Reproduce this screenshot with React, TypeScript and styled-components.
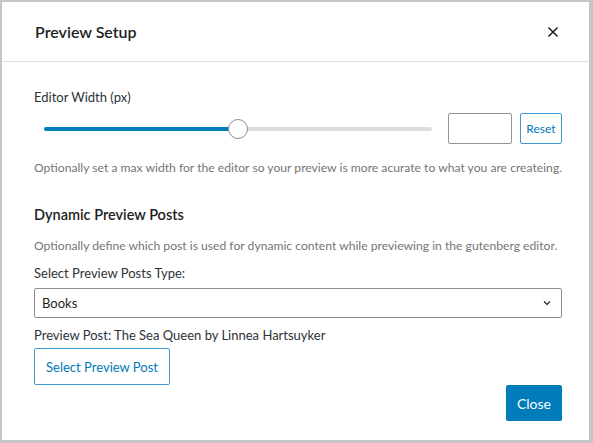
import React from 'react';
import styled, { createGlobalStyle } from 'styled-components';

const GlobalStyle = createGlobalStyle`
  html, body {
    margin: 0;
    padding: 0;
    background: #c6c6c6;
  }
  body {
    font-family: Lato, "Noto Sans", sans-serif;
    color: #1e1e1e;
  }
`;

const Backdrop = styled.div`
  width: 593px;
  height: 443px;
  padding: 2px 4px 3px 2px;
  box-sizing: border-box;
`;

const Modal = styled.div`
  width: 100%;
  height: 100%;
  background: #fff;
  display: flex;
  flex-direction: column;
`;

const Header = styled.div`
  flex-shrink: 0;
  height: 59px;
  border-bottom: 1px solid #e0e0e0;
  display: flex;
  align-items: center;
  justify-content: space-between;
  padding: 0 24px 0 33px;
`;

const Title = styled.h1`
  margin: 0;
  font-size: 16px;
  font-weight: 600;
  color: #1e1e1e;
`;

const CloseIcon = styled.button`
  border: none;
  background: none;
  padding: 0;
  width: 24px;
  height: 24px;
  display: flex;
  align-items: center;
  justify-content: center;
  color: #1e1e1e;
`;

const Body = styled.div`
  flex: 1;
  padding: 26px 27px 0 32px;
  display: flex;
  flex-direction: column;
`;

const Label = styled.div`
  font-size: 13px;
  color: #2c3338;
  line-height: 18px;
`;

const SliderRow = styled.div`
  display: flex;
  align-items: center;
  margin-top: 7px;
  padding-left: 10px;
`;

const Track = styled.div`
  position: relative;
  flex: 1;
  height: 4px;
  background: #dddddd;
  border-radius: 2px;
  margin-right: 16px;
`;

const Fill = styled.div`
  height: 100%;
  background: #007cba;
  border-radius: 2px;
`;

const Thumb = styled.div`
  position: absolute;
  top: 50%;
  width: 18px;
  height: 18px;
  margin: -10px 0 0 -10px;
  border-radius: 50%;
  background: #fff;
  border: 1px solid #8a8f96;
`;

const NumberInput = styled.input`
  width: 64px;
  height: 31px;
  box-sizing: border-box;
  border: 1px solid #949494;
  border-radius: 2px;
  margin-right: 8px;
`;

const SmallButton = styled.button`
  height: 31px;
  width: 42px;
  box-sizing: border-box;
  border: 1px solid #3d9ad1;
  border-radius: 2px;
  background: #fff;
  color: #0079b8;
  font-family: inherit;
  font-size: 12px;
  padding: 0;
`;

const Help = styled.p<{ $top: number }>`
  margin: ${(p) => p.$top}px 0 0;
  font-size: 12.15px;
  color: #757575;
  line-height: 18px;
  white-space: nowrap;
`;

const SectionTitle = styled.h2`
  margin: 28px 0 0;
  font-size: 14.5px;
  font-weight: 600;
  color: #1e1e1e;
  line-height: 20px;
`;

const FieldLabel = styled(Label)<{ $top: number }>`
  margin-top: ${(p) => p.$top}px;
`;

const SelectBox = styled.div`
  flex-shrink: 0;
  margin-top: 6px;
  height: 30px;
  box-sizing: border-box;
  border: 1px solid #8c8f94;
  border-radius: 2px;
  display: flex;
  align-items: center;
  justify-content: space-between;
  padding: 0 8px 0 7px;
  font-size: 13px;
  color: #1e1e1e;
`;

const OutlineButton = styled.button`
  flex-shrink: 0;
  margin-top: 4px;
  align-self: flex-start;
  height: 37px;
  width: 136px;
  box-sizing: border-box;
  border: 1px solid #3d9ad1;
  border-radius: 2px;
  background: #fff;
  color: #0079b8;
  font-family: inherit;
  font-size: 13px;
  padding: 0;
`;

const Footer = styled.div`
  display: flex;
  justify-content: flex-end;
`;

const PrimaryButton = styled.button`
  height: 36px;
  width: 56px;
  box-sizing: border-box;
  border: none;
  border-radius: 2px;
  background: #007cba;
  color: #fff;
  font-family: inherit;
  font-size: 14px;
  padding: 0;
`;

const App: React.FC = () => {
  const value = 50;
  return (
    <>
      <GlobalStyle />
      <Backdrop>
        <Modal>
          <Header>
            <Title>Preview Setup</Title>
            <CloseIcon aria-label="Close">
              <svg width="20" height="20" viewBox="0 0 24 24">
                <path d="M6.5 6.5l11 11M17.5 6.5l-11 11" stroke="currentColor" strokeWidth="1.8" fill="none" />
              </svg>
            </CloseIcon>
          </Header>
          <Body>
            <Label>Editor Width (px)</Label>
            <SliderRow>
              <Track>
                <Fill style={{ width: `${value}%` }} />
                <Thumb style={{ left: `${value}%` }} />
              </Track>
              <NumberInput type="text" />
              <SmallButton>Reset</SmallButton>
            </SliderRow>
            <Help $top={15}>
              Optionally set a max width for the editor so your preview is more acurate to what you are createing.
            </Help>
            <SectionTitle>Dynamic Preview Posts</SectionTitle>
            <Help $top={12}>
              Optionally define which post is used for dynamic content while previewing in the gutenberg editor.
            </Help>
            <FieldLabel $top={9}>Select Preview Posts Type:</FieldLabel>
            <SelectBox>
              <span>Books</span>
              <svg width="12" height="12" viewBox="0 0 24 24">
                <path d="M6 9l6 6 6-6" stroke="#1e1e1e" strokeWidth="2.2" fill="none" />
              </svg>
            </SelectBox>
            <FieldLabel $top={8}>Preview Post: The Sea Queen by Linnea Hartsuyker</FieldLabel>
            <OutlineButton>Select Preview Post</OutlineButton>
            <Footer>
              <PrimaryButton>Close</PrimaryButton>
            </Footer>
          </Body>
        </Modal>
      </Backdrop>
    </>
  );
};

export default App;
